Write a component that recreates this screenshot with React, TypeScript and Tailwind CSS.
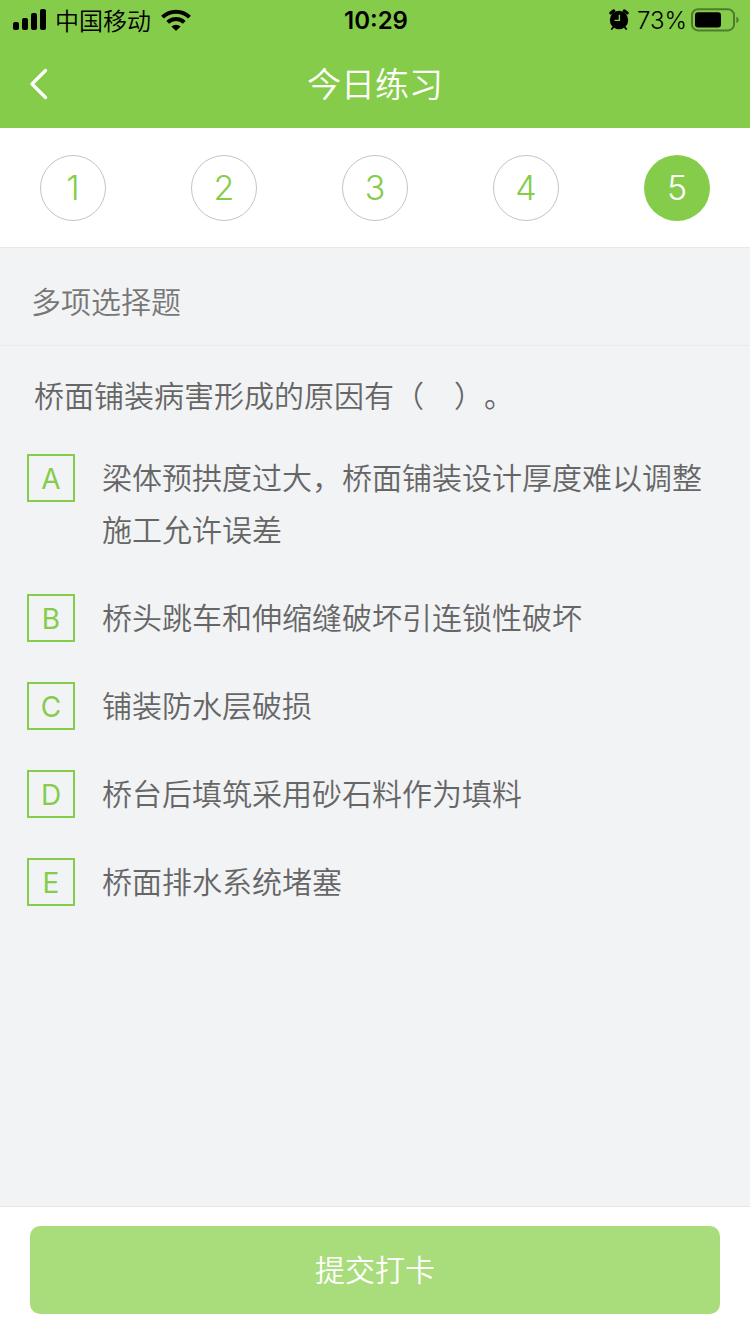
import { useState } from "react";

const QUESTION_COUNT = 5;

const OPTIONS = [
    { key: "A", text: "梁体预拱度过大，桥面铺装设计厚度难以调整施工允许误差" },
    { key: "B", text: "桥头跳车和伸缩缝破坏引连锁性破坏" },
    { key: "C", text: "铺装防水层破损" },
    { key: "D", text: "桥台后填筑采用砂石料作为填料" },
    { key: "E", text: "桥面排水系统堵塞" },
];

function SignalIcon() {
    return (
        <svg className="w-[34px] h-[22px]" viewBox="0 0 34 22" fill="currentColor">
            <rect x="0" y="13" width="6" height="8" rx="2" />
            <rect x="9" y="9" width="6" height="12" rx="2" />
            <rect x="18" y="4" width="6" height="17" rx="2" />
            <rect x="27" y="0" width="6" height="21" rx="2" />
        </svg>
    );
}

function WifiIcon() {
    return (
        <svg className="w-[30px] h-[22px] ml-0.5" viewBox="0 0 30 22" fill="none" stroke="currentColor" strokeWidth="4">
            <path d="M1.5 8.2a19.2 19.2 0 0 1 27 0" />
            <path d="M6.7 13.4a11.8 11.8 0 0 1 16.6 0" />
            <path d="M10.4 17.6a6.6 6.6 0 0 1 9.2 0L15 22z" fill="currentColor" stroke="none" />
        </svg>
    );
}

function AlarmIcon() {
    return (
        <svg className="w-5 h-[22px]" viewBox="0 0 20 22">
            <g stroke="currentColor" strokeLinecap="round">
                <path d="M1.8 4 4.8 1.8M18.2 4l-3-2.2" strokeWidth="3" />
                <path d="m4.4 18-1.6 2M15.6 18l1.6 2" strokeWidth="1.8" />
            </g>
            <circle cx="10" cy="11" r="9.2" fill="currentColor" />
            <path d="M10.4 5.8v5.6H5.6" fill="none" stroke="#86cc4b" strokeWidth="1.4" />
        </svg>
    );
}

function BatteryIcon() {
    return (
        <svg className="w-12 h-6" viewBox="0 0 48 24">
            <rect x="1" y="1.2" width="42" height="21.2" rx="6" fill="none" stroke="#000" strokeOpacity="0.4" strokeWidth="2" />
            <rect x="4" y="4.2" width="26" height="15.2" rx="3" fill="#000" />
            <path d="M45.4 8.4c1.5.7 2.3 2 2.3 3.4s-.8 2.7-2.3 3.4z" fill="#000" fillOpacity="0.4" />
        </svg>
    );
}

export default function App() {
    const [current, setCurrent] = useState(5);

    return (
        <main className="min-h-screen flex flex-col bg-[#f2f3f5] text-[#666] font-['Noto_Sans_CJK_SC',sans-serif]">
            <header className="bg-[#86cc4b]">
                {/* Status bar */}
                <div className="grid grid-cols-3 items-center h-10 pl-[13px] pr-[11px] text-2xl text-black">
                    <div className="flex items-center gap-2">
                        <SignalIcon />
                        <span className="font-[350]">中国移动</span>
                        <WifiIcon />
                    </div>
                    <time className="pt-0.5 text-center font-semibold font-['Inter',sans-serif]">10:29</time>
                    <div className="flex items-center justify-end">
                        <AlarmIcon />
                        <span className="pt-0.5 ml-2 mr-1 font-[350] font-['Inter',sans-serif]">73%</span>
                        <BatteryIcon />
                    </div>
                </div>

                {/* Title bar */}
                <div className="grid grid-cols-[80px_1fr_80px] items-center h-[88px] text-white">
                    <button type="button" aria-label="返回" className="flex items-center h-full pl-[30px]">
                        <svg className="w-[18px] h-8" viewBox="0 0 18 32" fill="none" stroke="currentColor" strokeWidth="3.2" strokeLinecap="round" strokeLinejoin="round">
                            <path d="M15.5 2.5 2 16l13.5 13.5" />
                        </svg>
                    </button>
                    <h1 className="pb-1 text-center text-[34px] font-[350]">今日练习</h1>
                </div>
            </header>

            {/* Question numbers */}
            <nav className="flex justify-between px-10 pt-[27px] pb-[26px] bg-white border-b border-[#e8e8e8]">
                {Array.from({ length: QUESTION_COUNT }, (_, i) => i + 1).map((n) => (
                    <button
                        key={n}
                        type="button"
                        onClick={() => setCurrent(n)}
                        className={`size-[66px] rounded-full text-[34px] leading-none font-[350] font-['Inter',sans-serif] ${
                            n === current ? "bg-[#86cc4b] text-white" : "border border-[#c4c4c4] text-[#86cc4b]"
                        }`}
                    >
                        {n}
                    </button>
                ))}
            </nav>

            <h2 className="px-[31px] pt-[27px] pb-[19px] border-b border-[#e8eaec] text-[30px] leading-[51px] font-[350] text-[#777]">
                多项选择题
            </h2>

            <section className="flex-1 pt-[22px] pb-9 pl-[27px] pr-8 text-[30px] leading-[52px] font-[350]">
                <p className="pl-[7px] [text-spacing-trim:space-all]">桥面铺装病害形成的原因有（　）。</p>
                <div className="flex flex-col gap-9 mt-[30px]">
                    {OPTIONS.map((option) => (
                        <label key={option.key} className="flex items-start gap-[27px]">
                            <span className="grid shrink-0 size-12 mt-1 place-items-center text-[#86cc4b] has-checked:text-white">
                                <input
                                    type="checkbox"
                                    name="answer"
                                    value={option.key}
                                    className="col-start-1 row-start-1 size-12 appearance-none border-2 border-[#86cc4b] checked:bg-[#86cc4b]"
                                />
                                <span className="col-start-1 row-start-1 pt-0.5 text-[28px] leading-none font-normal font-['Inter',sans-serif] pointer-events-none">
                                    {option.key}
                                </span>
                            </span>
                            <span>{option.text}</span>
                        </label>
                    ))}
                </div>
            </section>

            <footer className="px-[30px] pt-[19px] pb-5 bg-white border-t border-[#e6e7e9]">
                <button type="button" className="w-full h-[88px] pb-1 rounded-[10px] bg-[#a9dc7a] text-[30px] font-[350] text-white">
                    提交打卡
                </button>
            </footer>
        </main>
    );
}
